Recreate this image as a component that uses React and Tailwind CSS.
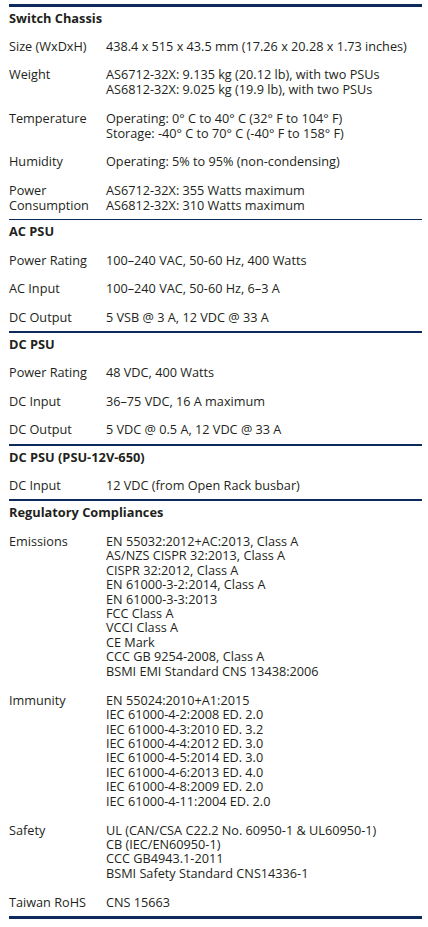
import React from "react";

const sections = [
  {
    title: "Switch Chassis",
    lead: "leading-[15px]",
    pad: "py-[6.7px]",
    rows: [
      ["Size (WxDxH)", ["438.4 x 515 x 43.5 mm (17.26 x 20.28 x 1.73 inches)"]],
      ["Weight", ["AS6712-32X: 9.135 kg (20.12 lb), with two PSUs", "AS6812-32X: 9.025 kg (19.9 lb), with two PSUs"]],
      ["Temperature", ["Operating: 0° C to 40° C (32° F to 104° F)", "Storage: -40° C to 70° C (-40° F to 158° F)"]],
      ["Humidity", ["Operating: 5% to 95% (non-condensing)"]],
      [["Power", "Consumption"], ["AS6712-32X: 355 Watts maximum", "AS6812-32X: 310 Watts maximum"]],
    ],
    rule: "border-b",
  },
  {
    title: "AC PSU",
    rows: [
      ["Power Rating", ["100–240 VAC, 50-60 Hz, 400 Watts"]],
      ["AC Input", ["100–240 VAC, 50-60 Hz, 6–3 A"]],
      ["DC Output", ["5 VSB @ 3 A, 12 VDC @ 33 A"]],
    ],
    rule: "border-b-2",
  },
  {
    title: "DC PSU",
    rows: [
      ["Power Rating", ["48 VDC, 400 Watts"]],
      ["DC Input", ["36–75 VDC, 16 A maximum"]],
      ["DC Output", ["5 VDC @ 0.5 A, 12 VDC @ 33 A"]],
    ],
    rule: "border-b-2",
  },
  {
    title: "DC PSU (PSU-12V-650)",
    rows: [["DC Input", ["12 VDC (from Open Rack busbar)"]]],
    rule: "border-b-2",
  },
  {
    title: "Regulatory Compliances",
    pad: "py-[7.3px]",
    rows: [
      [
        "Emissions",
        [
          "EN 55032:2012+AC:2013, Class A",
          "AS/NZS CISPR 32:2013, Class A",
          "CISPR 32:2012, Class A",
          "EN 61000-3-2:2014, Class A",
          "EN 61000-3-3:2013",
          "FCC Class A",
          "VCCI Class A",
          "CE Mark",
          "CCC GB 9254-2008, Class A",
          "BSMI EMI Standard CNS 13438:2006",
        ],
      ],
      [
        "Immunity",
        [
          "EN 55024:2010+A1:2015",
          "IEC 61000-4-2:2008 ED. 2.0",
          "IEC 61000-4-3:2010 ED. 3.2",
          "IEC 61000-4-4:2012 ED. 3.0",
          "IEC 61000-4-5:2014 ED. 3.0",
          "IEC 61000-4-6:2013 ED. 4.0",
          "IEC 61000-4-8:2009 ED. 2.0",
          "IEC 61000-4-11:2004 ED. 2.0",
        ],
      ],
      [
        "Safety",
        [
          "UL (CAN/CSA C22.2 No. 60950-1 & UL60950-1)",
          "CB (IEC/EN60950-1)",
          "CCC GB4943.1-2011",
          "BSMI Safety Standard CNS14336-1",
        ],
      ],
      ["Taiwan RoHS", ["CNS 15663"]],
    ],
    rule: "border-b-[3px]",
  },
];

function Row({ label, lines, lead, pad }) {
  const labels = Array.isArray(label) ? label : [label];
  return (
    <div className={`grid grid-cols-[97px_1fr] ${pad} ${lead}`}>
      <div>
        {labels.map((l) => (
          <div key={l}>{l}</div>
        ))}
      </div>
      <div>
        {lines.map((l) => (
          <div key={l}>{l}</div>
        ))}
      </div>
    </div>
  );
}

export default function App() {
  return (
    <div className="min-h-[927px] bg-white pt-[4px] font-['Open_Sans',sans-serif] text-[12.7px] text-[#231f20]">
      <div className="ml-[9px] w-[413px] border-t-[3px] border-[#0c2b5c]">
        {sections.map((s) => (
          <div key={s.title} className={`${s.rule} border-[#0c2b5c]`}>
            <div className="pt-[4px] pb-[7px] text-[12.8px] font-bold leading-[14.4px]">{s.title}</div>
            {s.rows.map(([label, lines]) => (
              <Row
                key={Array.isArray(label) ? label.join() : label}
                label={label}
                lines={lines}
                lead={s.lead || "leading-[14.4px]"}
                pad={s.pad || "py-[7px]"}
              />
            ))}
          </div>
        ))}
      </div>
    </div>
  );
}
